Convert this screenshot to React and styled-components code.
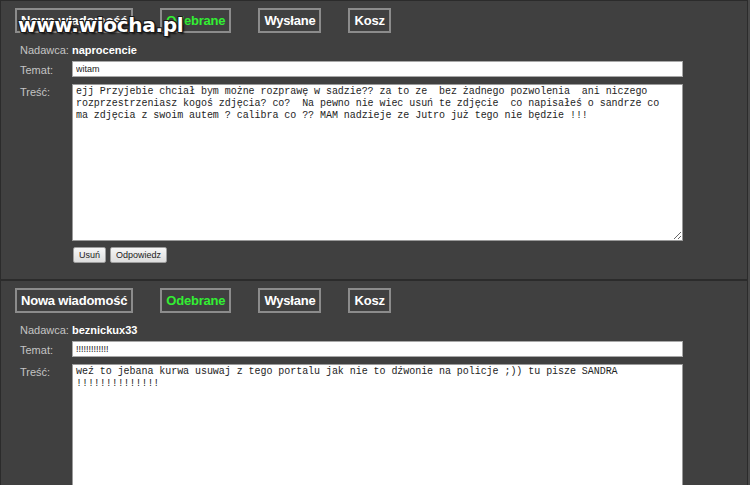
import React from "react";
import styled, { createGlobalStyle } from "styled-components";

const GlobalStyle = createGlobalStyle`
	html, body {
		margin: 0;
		padding: 0;
		background: #4a4a4a;
	}
	body {
		font-family: "Liberation Sans", Arial, sans-serif;
		overflow: hidden;
	}
`;

const Page = styled.div`
	position: relative;
	width: 750px;
	height: 485px;
	overflow: hidden;
	display: flex;
	flex-direction: column;
`;

const Panel = styled.section`
	width: 746px;
	background: #404040;
	border: 1px solid #2b2b2b;
	padding: 7px 0 16px;
	display: flex;
	flex-direction: column;
	flex-shrink: 0;
`;

const Tabs = styled.nav`
	display: flex;
	gap: 27px;
	padding-left: 14px;
	margin-bottom: 13px;
`;

const Tab = styled.a`
	display: flex;
	align-items: center;
	height: 21px;
	padding: 0 4px;
	border: 2px solid #8c8c8c;
	color: ${({ $active }) => ($active ? "#33ee33" : "#ffffff")};
	font-weight: bold;
	font-size: 13px;
	text-decoration: none;
	letter-spacing: -0.2px;
`;

const Form = styled.div`
	display: grid;
	grid-template-columns: 52px 611px;
	row-gap: 6px;
	padding-left: 19px;
	align-items: start;
`;

const Label = styled.span`
	color: #c4c4c4;
	font-size: 11px;
	line-height: ${({ $lh }) => $lh || 9}px;
	padding-top: ${({ $top }) => $top || 0}px;
`;

const Sender = styled.span`
	color: #ffffff;
	font-weight: bold;
	font-size: 11px;
	line-height: 9px;
`;

const Input = styled.input`
	box-sizing: border-box;
	width: 611px;
	height: 16px;
	margin: 0;
	padding: 0 3px;
	border: 1px solid #a8a8a8;
	background: #fff;
	font-family: "Liberation Sans", Arial, sans-serif;
	font-size: 9px;
	color: #222;
	outline: none;
`;

const Body = styled.textarea`
	box-sizing: border-box;
	width: 611px;
	height: ${({ $h }) => $h}px;
	margin: 0;
	padding: 1px 3px;
	border: 1px solid #9a9a9a;
	background: #fff;
	font-family: "Liberation Mono", "Courier New", monospace;
	font-size: 10px;
	line-height: 12px;
	letter-spacing: -0.05px;
	color: #1e1e1e;
	white-space: pre;
	overflow: hidden;
	outline: none;
`;

const Actions = styled.div`
	grid-column: 2;
	display: flex;
	gap: 4px;
	padding-left: 1px;
`;

const Button = styled.button`
	height: 16px;
	padding: 0 5px;
	border: 1px solid #9d9d9d;
	border-radius: 2px;
	background: linear-gradient(#f6f6f6, #dddddd);
	font-family: "Liberation Sans", Arial, sans-serif;
	font-size: 9px;
	color: #222;
`;

const Watermark = styled.div`
	position: absolute;
	left: 18px;
	top: 13px;
	font-family: "DejaVu Sans", Verdana, sans-serif;
	font-weight: bold;
	font-size: 20px;
	letter-spacing: -0.3px;
	color: #ffffff;
	text-shadow: 1px 1px 0 #1a1a1a, -1px -1px 0 #1a1a1a, 1px -1px 0 #1a1a1a,
		-1px 1px 0 #1a1a1a, 2px 2px 2px rgba(0, 0, 0, 0.7);
	pointer-events: none;
`;

const tabs = ["Nowa wiadomość", "Odebrane", "Wysłane", "Kosz"];

const messages = [
	{
		from: "naprocencie",
		subject: "witam",
		height: 157,
		buttons: true,
		body: [
			"ejj Przyjebie chciał bym możne rozprawę w sadzie?? za to ze  bez żadnego pozwolenia  ani niczego",
			"rozprzestrzeniasz kogoś zdjęcia? co?  Na pewno nie wiec usuń te zdjęcie  co napisałeś o sandrze co",
			"ma zdjęcia z swoim autem ? calibra co ?? MAM nadzieje ze Jutro już tego nie będzie !!!",
		].join("\n"),
	},
	{
		from: "beznickux33",
		subject: "!!!!!!!!!!!!!",
		height: 157,
		buttons: false,
		body: [
			"weź to jebana kurwa usuwaj z tego portalu jak nie to dźwonie na policje ;)) tu pisze SANDRA",
			"!!!!!!!!!!!!!!",
		].join("\n"),
	},
];

const Message = ({ from, subject, body, height, buttons }) => (
	<Panel>
		<Tabs>
			{tabs.map((t) => (
				<Tab key={t} $active={t === "Odebrane"}>
					{t}
				</Tab>
			))}
		</Tabs>
		<Form>
			<Label>Nadawca:</Label>
			<Sender>{from}</Sender>
			<Label $lh={16} $top={1}>Temat:</Label>
			<Input readOnly value={subject} />
			<Label $lh={14} $top={1}>Treść:</Label>
			<Body readOnly value={body} $h={height} />
			{buttons && (
				<Actions>
					<Button>Usuń</Button>
					<Button>Odpowiedz</Button>
				</Actions>
			)}
		</Form>
	</Panel>
);

export default function App() {
	return (
		<>
			<GlobalStyle />
			<Page>
				{messages.map((m) => (
					<Message key={m.from} {...m} />
				))}
				<Watermark>www.wiocha.pl</Watermark>
			</Page>
		</>
	);
}
